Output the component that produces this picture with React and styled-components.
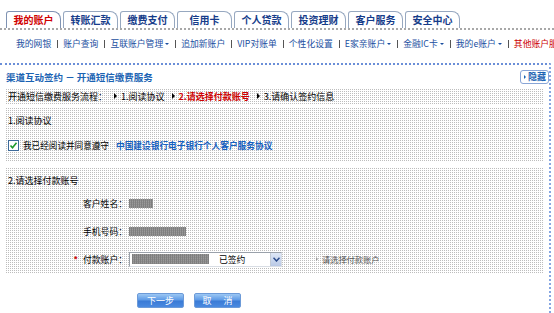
import React from 'react';
import styled, { createGlobalStyle, css } from 'styled-components';

const GlobalStyle = createGlobalStyle`
  html, body { margin: 0; padding: 0; background: #fff; }
  body {
    font-family: "Noto Sans CJK SC", "Noto Sans", sans-serif;
    font-size: 9px;
    color: #000;
  }
  * { box-sizing: border-box; }
`;

const dotted = css`
  background-color: #fff;
  background-image:
    linear-gradient(90deg, #fff 1px, transparent 1px),
    linear-gradient(#fff 1px, #bdbdbd 1px);
  background-size: 2px 2px;
`;

const Page = styled.div`
  width: 554px;
  height: 313px;
  overflow: hidden;
`;

const TabBar = styled.div`
  display: flex;
  gap: 2px;
  padding: 11px 0 0 6px;
  height: 30px;
  border-bottom: 2px dotted #a8a8a8;
`;

const Tab = styled.div`
  width: 55px;
  height: 17px;
  border: 1px solid ${p => (p.$active ? '#7f93b3' : '#97a8c0')};
  border-bottom: none;
  border-radius: 3px 8px 0 0;
  font-weight: bold;
  font-size: 10px;
  line-height: 16px;
  text-align: center;
  color: ${p => (p.$active ? '#d00000' : '#163c8a')};
  background: #fff;
`;

const SubNav = styled.div`
  display: flex;
  align-items: center;
  height: 21px;
  padding: 7px 0 0 16px;
  font-size: 8.8px;
  line-height: 14px;
  white-space: nowrap;
  overflow: hidden;
  color: #1b4f9f;
`;

const NavItem = styled.span`
  display: inline-flex;
  align-items: center;
  flex-shrink: 0;
  color: ${p => (p.$red ? '#cc0000' : '#1b4f9f')};
`;

const Sep = styled.span`
  display: inline-block;
  flex-shrink: 0;
  width: 1px;
  height: 8px;
  background: #555;
  margin: 0 5px 0 6px;
`;

const DownTri = styled.span`
  display: inline-block;
  width: 0;
  height: 0;
  margin-left: 2px;
  border-left: 2px solid transparent;
  border-right: 2px solid transparent;
  border-top: 2px solid #1b4f9f;
`;

const Panel = styled.div`
  margin-top: 12px;
  width: 551px;
  height: 250px;
  border-top: 2px dotted #6b8fd8;
  border-right: 2px dotted #86a6e2;
`;

const HeaderRow = styled.div`
  display: flex;
  align-items: center;
  justify-content: space-between;
  height: 23px;
  padding-left: 6px;
`;

const Title = styled.div`
  font-weight: bold;
  font-size: 9.5px;
  color: #1b63b3;
`;

const HideBtn = styled.div`
  display: flex;
  align-items: center;
  gap: 2px;
  height: 14px;
  padding: 0 2px 0 3px;
  border: 1px solid #89a5d6;
  border-radius: 3px;
  font-weight: bold;
  font-size: 9px;
  color: #1b63b3;
`;

const RightTri = styled.span`
  display: inline-block;
  width: 0;
  height: 0;
  border-top: ${p => p.$s || 2}px solid transparent;
  border-bottom: ${p => p.$s || 2}px solid transparent;
  border-left: ${p => p.$s || 2}px solid ${p => p.$c || '#000'};
`;

const Content = styled.div`
  margin: 0 6px 0 5px;
`;

const StepBar = styled.div`
  ${dotted};
  display: flex;
  align-items: center;
  height: 16px;
  padding-left: 3px;
  font-size: 9px;
  white-space: nowrap;
`;

const Step = styled.span`
  color: ${p => (p.$current ? '#d00000' : '#000')};
  font-weight: ${p => (p.$current ? 'bold' : 'normal')};
`;

const StepArrow = styled.span`
  display: inline-flex;
  margin: 0 4px 0 7px;
`;

const Section = styled.div`
  ${dotted};
  margin-top: ${p => p.$mt || 0}px;
`;

const SectionHead = styled.div`
  height: 22px;
  padding: 6px 0 0 3px;
  line-height: 16px;
  font-size: 9px;
`;

const AgreeRow = styled.div`
  display: flex;
  align-items: center;
  height: 32px;
  padding-left: 3px;
  font-size: 8.6px;
`;

const Check = styled.svg`
  width: 11px;
  height: 11px;
  margin-right: 4px;
`;

const AgreeLink = styled.span`
  margin-left: 7px;
  font-weight: bold;
  font-size: 8.7px;
  color: #1560c0;
`;

const FormRow = styled.div`
  display: grid;
  grid-template-columns: 122px max-content max-content;
  justify-content: start;
  align-items: center;
  column-gap: 2px;
  height: 28px;
  font-size: 8.8px;
`;

const Label = styled.div`
  display: flex;
  align-items: center;
  justify-content: flex-end;
`;

const Star = styled.span`
  color: #d00000;
  font-weight: bold;
  margin-right: 5px;
`;

const Redacted = styled.span`
  display: inline-block;
  width: ${p => p.$w}px;
  height: ${p => p.$h || 9}px;
  background-color: #8e8e8e;
  background-image:
    linear-gradient(90deg, #7f7f7f 1px, transparent 1px),
    linear-gradient(#9a9a9a 1px, transparent 1px);
  background-size: 2px 2px;
`;

const Select = styled.div`
  display: flex;
  align-items: center;
  width: 153px;
  height: 15px;
  padding-left: 2px;
  border: 1px solid #9aa1aa;
  border-right-color: #d8dde4;
  border-bottom-color: #d8dde4;
  background: #fff;
`;

const SelectText = styled.span`
  margin-left: 10px;
  flex: 1;
`;

const SelectArrow = styled.span`
  display: flex;
  align-items: center;
  justify-content: center;
  width: 11px;
  height: 13px;
  background: linear-gradient(#dfe8f7, #b9c9e6);
  border-left: 1px solid #c3cbd6;
`;

const Hint = styled.span`
  display: inline-flex;
  align-items: center;
  gap: 4px;
  margin-left: 32px;
  color: #555;
  font-size: 8.2px;
`;

const ButtonRow = styled.div`
  display: flex;
  gap: 10px;
  margin-top: 20px;
  padding-left: 132px;
`;

const Button = styled.div`
  width: 47px;
  height: 15px;
  display: flex;
  align-items: center;
  justify-content: center;
  border: 1px solid #6c9ad8;
  border-radius: 2px;
  background: linear-gradient(#9cc7f4 0%, #5f9be6 45%, #3b7bd6 55%, #4a8ae0 100%);
  color: #fff;
  font-size: 9px;
  word-spacing: 10px;
  white-space: pre;
`;

const tabs = ['我的账户', '转账汇款', '缴费支付', '信用卡', '个人贷款', '投资理财', '客户服务', '安全中心'];
const nav = [
  { t: '我的网银' },
  { t: '账户查询' },
  { t: '互联账户管理', d: true },
  { t: '追加新账户' },
  { t: 'VIP对账单' },
  { t: '个性化设置' },
  { t: 'E家亲账户', d: true },
  { t: '金融IC卡', d: true },
  { t: '我的e账户', d: true },
  { t: '其他账户服务', red: true },
];

export default function App() {
  return (
    <Page>
      <GlobalStyle />
      <TabBar>
        {tabs.map((t, i) => (
          <Tab key={t} $active={i === 0}>{t}</Tab>
        ))}
      </TabBar>
      <SubNav>
        {nav.map((n, i) => (
          <React.Fragment key={n.t}>
            {i > 0 && <Sep />}
            <NavItem $red={n.red}>
              {n.t}
              {n.d && <DownTri />}
            </NavItem>
          </React.Fragment>
        ))}
      </SubNav>
      <Panel>
        <HeaderRow>
          <Title>渠道互动签约 － 开通短信缴费服务</Title>
          <HideBtn>
            <RightTri $c="#1b63b3" />
            隐藏
          </HideBtn>
        </HeaderRow>
        <Content>
          <StepBar>
            <Step>开通短信缴费服务流程：</Step>
            <StepArrow><RightTri $s={3} /></StepArrow>
            <Step>1.阅读协议</Step>
            <StepArrow><RightTri $s={3} /></StepArrow>
            <Step $current>2.请选择付款账号</Step>
            <StepArrow><RightTri $s={3} /></StepArrow>
            <Step>3.请确认签约信息</Step>
          </StepBar>
          <Section $mt={3}>
            <SectionHead>1.阅读协议</SectionHead>
            <AgreeRow>
              <Check viewBox="0 0 11 11">
                <rect x="0.5" y="0.5" width="10" height="10" fill="#fff" stroke="#3d6a9a" />
                <path d="M2.5 5.5 L4.5 7.7 L8.5 2.8" fill="none" stroke="#1e9a2a" strokeWidth="1.6" />
              </Check>
              我已经阅读并同意遵守
              <AgreeLink>中国建设银行电子银行个人客户服务协议</AgreeLink>
            </AgreeRow>
          </Section>
          <Section $mt={6}>
            <SectionHead>2.请选择付款账号</SectionHead>
            <FormRow>
              <Label>客户姓名：</Label>
              <Redacted $w={24} />
            </FormRow>
            <FormRow>
              <Label>手机号码：</Label>
              <Redacted $w={57} />
            </FormRow>
            <FormRow>
              <Label><Star>*</Star>付款账户：</Label>
              <Select>
                <Redacted $w={77} $h={10} />
                <SelectText>已签约</SelectText>
                <SelectArrow>
                  <svg width="7" height="5" viewBox="0 0 7 5">
                    <path d="M0.5 0.8 L3.5 4 L6.5 0.8" fill="none" stroke="#2a4a8a" strokeWidth="1.5" />
                  </svg>
                </SelectArrow>
              </Select>
              <Hint>
                <RightTri $s={2} $c="#999" />
                请选择付款账户
              </Hint>
            </FormRow>
          </Section>
          <ButtonRow>
            <Button>下一步</Button>
            <Button>取 消</Button>
          </ButtonRow>
        </Content>
      </Panel>
    </Page>
  );
}
